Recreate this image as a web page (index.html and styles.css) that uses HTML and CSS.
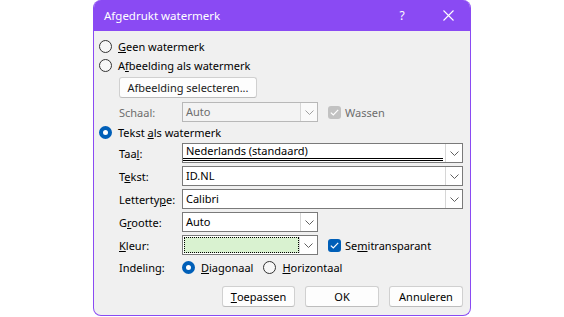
FILE: index.html
```html
<!DOCTYPE html>
<html>
<head>
<meta charset="utf-8">
<link rel="stylesheet" href="styles.css">
</head>
<body>
<div class="dialog">
  <div class="titlebar">
    <span class="title">Afgedrukt watermerk</span>
    <span class="help">?</span>
    <span class="close">
      <svg width="11" height="11" viewBox="0 0 11 11"><path d="M0.5 0.5 L10.5 10.5 M10.5 0.5 L0.5 10.5" stroke="#fff" stroke-width="1.1" fill="none"/></svg>
    </span>
  </div>
  <div class="content">
    <div class="row r-geen">
      <span class="radio"></span><span class="rlabel"><u>G</u>een watermerk</span>
    </div>
    <div class="row r-afb">
      <span class="radio"></span><span class="rlabel">A<u>f</u>beelding als watermerk</span>
    </div>
    <div class="row r-btn">
      <span class="btn btn-select">Afbeelding selecteren...</span>
    </div>
    <div class="row r-field r-schaal">
      <span class="flabel disabled">Schaal:</span>
      <span class="combo short disabled"><span class="ctext">Auto</span><span class="drop"><svg width="9" height="5" viewBox="0 0 9 5"><path d="M0.5 0.5 L4.5 4.5 L8.5 0.5" stroke="#a0a0a0" fill="none"/></svg></span></span>
      <span class="check disabled-check"><svg width="9" height="7" viewBox="0 0 9 7"><path d="M0.8 3.6 L3.3 6 L8.2 0.9" stroke="#fff" stroke-width="1.2" fill="none"/></svg></span>
      <span class="clabel disabled">Wassen</span>
    </div>
    <div class="row r-tekstals">
      <span class="radio on"></span><span class="rlabel">Tekst <u>a</u>ls watermerk</span>
    </div>
    <div class="row r-field r-taal">
      <span class="flabel">Taa<u>l</u>:</span>
      <span class="combo long"><span class="ctext dbl">Nederlands (standaard)</span><span class="drop"><svg width="9" height="5" viewBox="0 0 9 5"><path d="M0.5 0.5 L4.5 4.5 L8.5 0.5" stroke="#606060" fill="none"/></svg></span></span>
    </div>
    <div class="row r-field r-gap">
      <span class="flabel">T<u>e</u>kst:</span>
      <span class="combo long"><span class="ctext">ID.NL</span><span class="drop"><svg width="9" height="5" viewBox="0 0 9 5"><path d="M0.5 0.5 L4.5 4.5 L8.5 0.5" stroke="#606060" fill="none"/></svg></span></span>
    </div>
    <div class="row r-field r-gap">
      <span class="flabel">Letterty<u>p</u>e:</span>
      <span class="combo long"><span class="ctext">Calibri</span><span class="drop"><svg width="9" height="5" viewBox="0 0 9 5"><path d="M0.5 0.5 L4.5 4.5 L8.5 0.5" stroke="#606060" fill="none"/></svg></span></span>
    </div>
    <div class="row r-field r-gap">
      <span class="flabel">G<u>r</u>ootte:</span>
      <span class="combo short"><span class="ctext">Auto</span><span class="drop"><svg width="9" height="5" viewBox="0 0 9 5"><path d="M0.5 0.5 L4.5 4.5 L8.5 0.5" stroke="#606060" fill="none"/></svg></span></span>
    </div>
    <div class="row r-field r-gap">
      <span class="flabel"><u>K</u>leur:</span>
      <span class="combo short color"><span class="swatch"></span><span class="drop"><svg width="9" height="5" viewBox="0 0 9 5"><path d="M0.5 0.5 L4.5 4.5 L8.5 0.5" stroke="#606060" fill="none"/></svg></span></span>
      <span class="check on-check"><svg width="9" height="7" viewBox="0 0 9 7"><path d="M0.8 3.6 L3.3 6 L8.2 0.9" stroke="#fff" stroke-width="1.2" fill="none"/></svg></span>
      <span class="clabel">Se<u>m</u>itransparant</span>
    </div>
    <div class="row r-indeling">
      <span class="flabel">Indeling:</span>
      <span class="radio on"></span><span class="rlabel"><u>D</u>iagonaal</span>
      <span class="radio r2"></span><span class="rlabel"><u>H</u>orizontaal</span>
    </div>
    <div class="row r-buttons">
      <span class="btn b-toe"><u>T</u>oepassen</span>
      <span class="btn b-ok">OK</span>
      <span class="btn b-ann">Annuleren</span>
    </div>
  </div>
</div>
</body>
</html>
```
FILE: styles.css
```css
html, body {
  margin: 0;
  padding: 0;
  background: #ffffff;
}
body {
  font-family: "Noto Sans", "Open Sans", sans-serif;
  font-size: 11px;
  color: #000;
}
.dialog {
  margin-left: 93px;
  width: 378px;
  height: 316px;
  box-sizing: border-box;
  border: 1px solid #8a4af3;
  border-top: none;
  border-radius: 8px;
  background: #f0f0f0;
  overflow: hidden;
  display: flex;
  flex-direction: column;
}
.titlebar {
  height: 31px;
  flex: none;
  background: #8a4af3;
  color: #fff;
  display: flex;
  align-items: center;
  padding-left: 10px;
  font-size: 11.5px;
}
.title { flex: 1; }
.help {
  width: 20px;
  text-align: center;
  margin-right: 26px;
  font-size: 12px;
}
.close {
  width: 20px;
  display: flex;
  justify-content: center;
  margin-right: 12px;
}
.content {
  display: flex;
  flex-direction: column;
  padding-left: 5px;
  padding-top: 6px;
}
.row {
  display: flex;
  align-items: center;
  height: 19px;
  flex: none;
  white-space: nowrap;
}
.radio {
  width: 11px;
  height: 11px;
  border: 1px solid #333;
  border-radius: 50%;
  background: #f7f7f7;
  box-sizing: content-box;
  flex: none;
}
.radio.on {
  width: 5px;
  height: 5px;
  border: 4px solid #005fb8;
  background: #fff;
}
.rlabel { margin-left: 6px; }
.r-btn { height: 20px; margin-top: 2px; padding-left: 20px; }
.btn {
  box-sizing: border-box;
  height: 21px;
  display: flex;
  align-items: center;
  justify-content: center;
  background: #fdfdfd;
  border: 1px solid #d0d0d0;
  border-bottom-color: #bdbdbd;
  border-radius: 3px;
}
.btn-select { width: 138px; color: #1a1a1a; }
.r-field { height: 20px; padding-left: 20px; }
.r-schaal { margin-top: 5px; }
.r-gap { margin-top: 3px; }
.r-tekstals { margin-top: 1px; }
.r-taal { margin-top: 1px; }
.flabel { width: 63px; flex: none; }
.disabled { color: #6d6d6d; }
.combo {
  box-sizing: border-box;
  height: 20px;
  border: 1px solid #7a7a7a;
  background: #fff;
  display: flex;
  align-items: stretch;
  flex: none;
}
.combo.short { width: 136px; }
.combo.long { width: 281px; }
.combo.disabled { background: #f3f3f3; border-color: #b8b8b8; }
.ctext {
  flex: 1;
  padding-left: 3px;
  display: flex;
  align-items: center;
  line-height: 16px;
}
.ctext.dbl {
  border-bottom: 3px double #000;
  margin-right: 2px;
  margin-bottom: 1px;
  line-height: 14px;
}
.drop {
  width: 16px;
  flex: none;
  border-left: 1px solid #d6d6d6;
  display: flex;
  align-items: center;
  justify-content: center;
  background: #fff;
}
.combo.disabled .drop { background: #fafafa; }
.combo.color { padding: 1px; }
.swatch {
  flex: 1;
  background: #d9f2d0;
  outline: 1px dotted #000;
  outline-offset: -1px;
}
.check {
  width: 13px;
  height: 13px;
  border-radius: 3px;
  display: flex;
  align-items: center;
  justify-content: center;
  flex: none;
  margin-left: 10px;
}
.disabled-check { background: #c2c2c2; }
.on-check { background: #005fb8; }
.clabel { margin-left: 4px; }
.r-indeling { margin-top: 3px; padding-left: 20px; }
.r-indeling .r2 { margin-left: 10px; }
.r-buttons {
  margin-top: 9px;
  height: 21px;
  padding-left: 123px;
}
.b-toe { width: 73px; }
.b-ok { width: 74px; margin-left: 10px; }
.b-ann { width: 74px; margin-left: 10px; }
```
